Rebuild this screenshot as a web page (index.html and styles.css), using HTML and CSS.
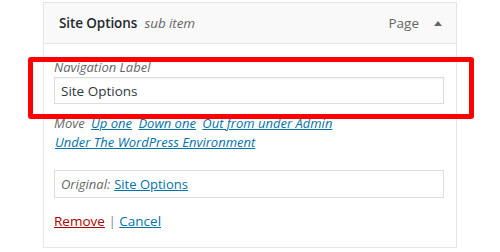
FILE: index.html
```html
<!DOCTYPE html>
<html lang="en">
<head>
    <meta charset="UTF-8">
    <meta name="viewport" content="width=device-width, initial-scale=1.0">
    <title>Menu Item</title>
    <link rel="stylesheet" href="styles.css">
</head>
<body>
    <div class="menu-item">
        <div class="item-bar">
            <span class="item-title">Site Options <span class="is-submenu">sub item</span></span>
            <span class="item-controls">
                <span class="item-type">Page</span>
                <span class="item-arrow"></span>
            </span>
        </div>

        <div class="item-settings">
            <label class="field-label">
                Navigation Label
                <input type="text" class="widefat" value="Site Options">
            </label>

            <p class="field-move">
                Move <a href="#">Up one</a> <a href="#">Down one</a> <a href="#">Out from under Admin</a><br>
                <a href="#" class="first">Under The WordPress Environment</a>
            </p>

            <div class="link-to-original">
                <span class="orig-label">Original:</span> <a href="#">Site Options</a>
            </div>

            <div class="item-actions">
                <a href="#" class="item-delete">Remove</a> <span class="meta-sep">|</span> <a href="#">Cancel</a>
            </div>
        </div>

        <div class="highlight"></div>
    </div>
</body>
</html>
```

FILE: styles.css
```css
:root {
    --wp-border: #e5e5e5;
    --wp-input-border: #ddd;
    --wp-text: #23282d;
    --wp-muted: #666;
    --wp-link: #0073aa;
    --wp-delete: #a00;
    --mark: #ff0000;
}

* {
    margin: 0;
    padding: 0;
    box-sizing: border-box;
    font-family: 'Open Sans', 'Noto Sans', Arial, sans-serif;
}

body {
    background: #fff;
    color: var(--wp-text);
    padding: 2px 0 0 43px;
}

.menu-item {
    position: relative;
    width: 414px;
    border: 1px solid var(--wp-border);
}

.item-bar {
    display: flex;
    justify-content: space-between;
    align-items: center;
    height: 41px;
    padding: 0 15px;
    background: #f9f9f9;
    border-bottom: 1px solid var(--wp-border);
    font-size: 13.5px;
}

.item-title {
    font-weight: 600;
    letter-spacing: -0.1px;
}

.is-submenu {
    font-weight: 400;
    font-style: italic;
    color: var(--wp-muted);
    margin-left: 4px;
}

.item-controls {
    display: flex;
    align-items: center;
    color: var(--wp-muted);
    font-size: 13.5px;
}

.item-arrow {
    width: 0;
    height: 0;
    margin-left: 15px;
    margin-right: -1px;
    border-left: 4px solid transparent;
    border-right: 4px solid transparent;
    border-bottom: 5px solid #666;
}

.item-settings {
    padding: 14px 10px 16px;
    font-size: 13px;
    line-height: 19px;
}

.field-label {
    display: block;
    width: 390px;
    font-style: italic;
    color: var(--wp-muted);
}

.widefat {
    display: block;
    width: 100%;
    height: 27px;
    padding: 0 6px;
    border: 1px solid var(--wp-input-border);
    box-shadow: inset 0 1px 2px rgba(0, 0, 0, 0.05);
    font-size: 13.5px;
    font-style: normal;
    color: #32373c;
    background: #fff;
}

.field-move {
    margin-top: 10px;
    width: 390px;
    font-style: italic;
    color: var(--wp-muted);
}

.field-move a {
    margin-left: 3px;
}

.field-move a.first {
    margin-left: 1px;
}

a {
    color: var(--wp-link);
    text-decoration: underline;
}

.link-to-original {
    margin-top: 18px;
    width: 390px;
    height: 28px;
    padding: 0 6px;
    display: flex;
    align-items: center;
    gap: 4px;
    border: 1px solid var(--wp-input-border);
}

.orig-label {
    font-style: italic;
    color: var(--wp-muted);
}

.item-actions {
    margin-top: 14px;
    font-size: 13.5px;
}

.item-delete {
    color: var(--wp-delete);
}

.meta-sep {
    color: #888;
}

/* annotation drawn over the label field */
.highlight {
    position: absolute;
    left: -16px;
    top: 54px;
    width: 446px;
    height: 62px;
    border: 5px solid var(--mark);
    border-radius: 3px;
    pointer-events: none;
}
```
